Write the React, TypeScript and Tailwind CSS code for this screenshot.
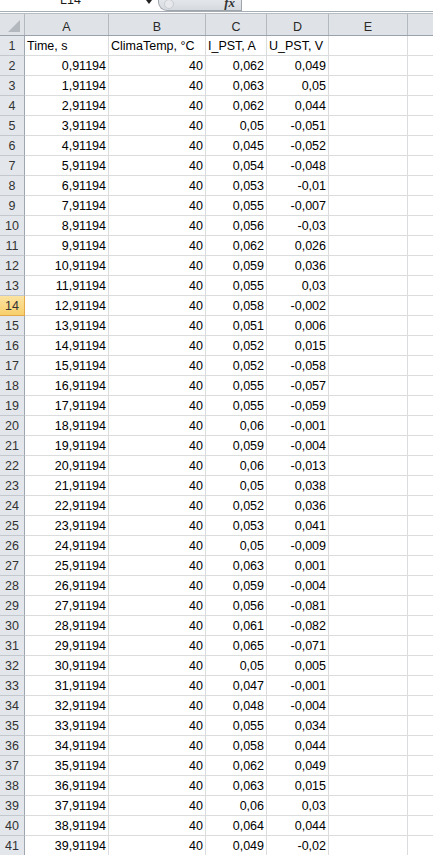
import React from 'react';

type Row = [string, string, string, string];

const HEAD: Row = ['Time, s', 'ClimaTemp, °C', 'I_PST, A', 'U_PST, V'];

const DATA: Row[] = [
  ['0,91194', '40', '0,062', '0,049'],
  ['1,91194', '40', '0,063', '0,05'],
  ['2,91194', '40', '0,062', '0,044'],
  ['3,91194', '40', '0,05', '-0,051'],
  ['4,91194', '40', '0,045', '-0,052'],
  ['5,91194', '40', '0,054', '-0,048'],
  ['6,91194', '40', '0,053', '-0,01'],
  ['7,91194', '40', '0,055', '-0,007'],
  ['8,91194', '40', '0,056', '-0,03'],
  ['9,91194', '40', '0,062', '0,026'],
  ['10,91194', '40', '0,059', '0,036'],
  ['11,91194', '40', '0,055', '0,03'],
  ['12,91194', '40', '0,058', '-0,002'],
  ['13,91194', '40', '0,051', '0,006'],
  ['14,91194', '40', '0,052', '0,015'],
  ['15,91194', '40', '0,052', '-0,058'],
  ['16,91194', '40', '0,055', '-0,057'],
  ['17,91194', '40', '0,055', '-0,059'],
  ['18,91194', '40', '0,06', '-0,001'],
  ['19,91194', '40', '0,059', '-0,004'],
  ['20,91194', '40', '0,06', '-0,013'],
  ['21,91194', '40', '0,05', '0,038'],
  ['22,91194', '40', '0,052', '0,036'],
  ['23,91194', '40', '0,053', '0,041'],
  ['24,91194', '40', '0,05', '-0,009'],
  ['25,91194', '40', '0,063', '0,001'],
  ['26,91194', '40', '0,059', '-0,004'],
  ['27,91194', '40', '0,056', '-0,081'],
  ['28,91194', '40', '0,061', '-0,082'],
  ['29,91194', '40', '0,065', '-0,071'],
  ['30,91194', '40', '0,05', '0,005'],
  ['31,91194', '40', '0,047', '-0,001'],
  ['32,91194', '40', '0,048', '-0,004'],
  ['33,91194', '40', '0,055', '0,034'],
  ['34,91194', '40', '0,058', '0,044'],
  ['35,91194', '40', '0,062', '0,049'],
  ['36,91194', '40', '0,063', '0,015'],
  ['37,91194', '40', '0,06', '0,03'],
  ['38,91194', '40', '0,064', '0,044'],
  ['39,91194', '40', '0,049', '-0,02'],
];

// column widths incl. the right grid line
const COL_W = ['w-[84px]', 'w-[97px]', 'w-[61px]', 'w-[62px]', 'w-[79px]'];
const LETTERS = ['A', 'B', 'C', 'D', 'E'];
const ACTIVE_ROW = 14;

const FormulaStrip = () => (
  <div className="flex h-[11px] overflow-hidden bg-white">
    <div className="w-[146px] shrink-0 pl-[60px]">
      <span className="-mt-[6px] block text-[12.5px] leading-none text-[#1a1a1a]">L14</span>
    </div>
    <div className="mt-[0px] h-0 w-0 border-x-[3.5px] border-t-[4px] border-x-transparent border-t-[#222]" />
    <div className="w-[6px] shrink-0" />
    <div className="relative -mt-[8px] flex h-[19px] w-[84px] shrink-0 items-end rounded-bl-[9px] border-b border-l border-r border-[#9ea4ab] bg-gradient-to-b from-[#eef0f3] to-[#d6dadf]">
      <div className="mb-[1px] ml-[5px] h-[10px] w-[10px] rounded-full border border-[#c9cdd2] bg-[#e6e8eb]" />
      <span className="mb-[1px] ml-auto mr-[6px] font-['Liberation_Serif',serif] text-[13px] font-bold italic leading-[12px] text-[#333]">
        fx
      </span>
    </div>
    <div className="flex-1" />
  </div>
);

const ColumnHeader = () => (
  <div className="flex h-[23px] border-b border-t border-b-[#9aa1aa] border-t-[#b7bcc3] bg-[#dfe3e8]">
    <div className="relative w-[25px] shrink-0 border-r border-[#b4b9c0]">
      <div className="absolute bottom-[3px] right-[4px] h-0 w-0 border-b-[12px] border-l-[12px] border-b-[#b3b8be] border-l-transparent" />
    </div>
    {LETTERS.map((l, i) => (
      <div
        key={l}
        className={`${COL_W[i]} shrink-0 border-r border-[#b4b9c0] text-center text-[12.5px] leading-[27px] text-[#2a2a2a]`}
      >
        {l}
      </div>
    ))}
    <div className="flex-1" />
  </div>
);

const SheetRow = ({ n, cells, head }: { n: number; cells: Row; head?: boolean }) => {
  const active = n === ACTIVE_ROW;
  return (
    <div className="flex h-[20px]">
      <div
        className={`w-[25px] shrink-0 border-b border-r text-center text-[12.5px] leading-[21px] ${
          active
            ? 'border-b-[#e2a84a] border-r-[#e2a84a] bg-gradient-to-b from-[#fce3a0] to-[#f7cf6c] text-[#333]'
            : 'border-b-[#c3c8ce] border-r-[#9ea6b0] bg-[#e3e7ec] text-[#333]'
        }`}
      >
        {n}
      </div>
      {cells.map((c, i) => (
        <div
          key={i}
          className={`${COL_W[i]} shrink-0 overflow-visible whitespace-nowrap border-b border-r border-[#dadcdd] text-[12.5px] leading-[21px] text-black ${
            head ? 'pl-[2px] text-left' : 'pr-[2px] text-right'
          }`}
        >
          {c}
        </div>
      ))}
      <div className={`${COL_W[4]} shrink-0 border-b border-r border-[#dadcdd]`} />
      <div className="flex-1 border-b border-[#dadcdd]" />
    </div>
  );
};

export default function App() {
  return (
    <div className="h-[855px] w-[433px] overflow-hidden bg-white font-['Liberation_Sans',Arial,sans-serif]">
      <FormulaStrip />
      <div className="h-[1px] bg-[#a7adb4]" />
      <div className="h-[1px] bg-white" />
      <ColumnHeader />
      <SheetRow n={1} cells={HEAD} head />
      {DATA.map((r, i) => (
        <SheetRow key={i} n={i + 2} cells={r} />
      ))}
    </div>
  );
}
